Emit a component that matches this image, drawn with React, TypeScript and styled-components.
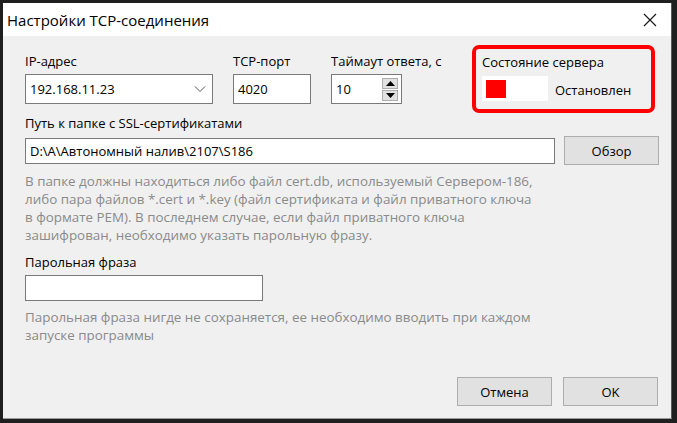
import React from 'react';
import styled, { createGlobalStyle } from 'styled-components';

const GlobalStyle = createGlobalStyle`
  html, body {
    margin: 0;
    padding: 0;
    width: 677px;
    height: 423px;
    overflow: hidden;
    background: #1f1f1f;
  }
  #root {
    height: 100%;
  }
  * {
    box-sizing: border-box;
  }
`;

const Frame = styled.div`
  height: 423px;
  padding: 3px 5px 4px 3px;
  font-family: 'Open Sans', 'Noto Sans', sans-serif;
  font-size: 13px;
  color: #000;
`;

const Window = styled.div`
  height: 100%;
  display: flex;
  flex-direction: column;
  background: #f0f0f0;
  border-bottom: 1px solid #9a9a9a;
  border-right: 1px solid #5a5a5a;
`;

const TitleBar = styled.div`
  height: 33px;
  background: #fff;
  display: flex;
  align-items: center;
  justify-content: space-between;
  padding: 0 14px 0 4px;
  font-size: 15px;
`;

const Content = styled.div`
  flex: 1;
  display: flex;
  flex-direction: column;
  padding: 9px 12px 12px 22px;
`;

const TopRow = styled.div`
  display: flex;
  align-items: flex-start;
  gap: 20px;
`;

const Field = styled.div<{ $w: number }>`
  width: ${(p) => p.$w}px;
  display: flex;
  flex-direction: column;
  padding-top: 7px;
`;

const Label = styled.div`
  height: 18px;
  line-height: 18px;
  margin-bottom: 4px;
  white-space: nowrap;
`;

const Box = styled.div<{ $h?: number }>`
  height: ${(p) => p.$h ?? 30}px;
  background: #fff;
  border: 1px solid #7a7a7a;
  display: flex;
  align-items: center;
  padding-left: 4px;
`;

const BoxText = styled.span`
  flex: 1;
  white-space: nowrap;
`;

const Chevron = styled.svg`
  margin-right: 6px;
`;

const Spin = styled.div`
  display: flex;
  flex-direction: column;
  gap: 1px;
  margin-right: 3px;
`;

const SpinBtn = styled.div`
  width: 16px;
  height: 11px;
  background: #e1e1e1;
  border: 1px solid #adadad;
  display: flex;
  align-items: center;
  justify-content: center;
`;

const StatusPanel = styled.div`
  margin-left: auto;
  margin-right: 4px;
  width: 183px;
  height: 68px;
  border: 4px solid #ff0000;
  border-radius: 7px;
  padding: 3px 6px 0 6px;
`;

const StatusTitle = styled.div`
  height: 20px;
  line-height: 20px;
`;

const StatusRow = styled.div`
  display: flex;
  align-items: center;
  margin-top: 4px;
`;

const Indicator = styled.div`
  width: 66px;
  height: 25px;
  background: #fff;
  padding: 4px;
`;

const IndicatorLamp = styled.div`
  width: 20px;
  height: 18px;
  background: #ff0000;
`;

const StatusText = styled.span`
  margin-left: 7px;
  padding-top: 2px;
`;

const PathSection = styled.div`
  margin-top: 1px;
  display: flex;
  flex-direction: column;
`;

const PathRow = styled.div`
  display: flex;
  align-items: center;
  gap: 9px;
`;

const WideBox = styled(Box)`
  flex: 1;
`;

const Button = styled.button<{ $w?: number }>`
  width: ${(p) => p.$w ?? 95}px;
  height: 29px;
  background: #e1e1e1;
  border: 1px solid #adadad;
  font: inherit;
  color: #000;
  padding: 0;
`;

const Hint = styled.p`
  margin: 7px 0 0 0;
  color: #8a8a8a;
  line-height: 18px;
  font-size: 13.4px;
  white-space: nowrap;
`;

const PassSection = styled.div`
  margin-top: 9px;
  display: flex;
  flex-direction: column;
  width: 238px;
`;

const Footer = styled.div`
  margin-top: auto;
  display: flex;
  justify-content: flex-end;
  gap: 11px;
  padding-right: 1px;
`;

const CloseIcon = () => (
  <svg width="14" height="14" viewBox="0 0 14 14">
    <path d="M1 1 L13 13 M13 1 L1 13" stroke="#1a1a1a" strokeWidth="1.2" fill="none" />
  </svg>
);

export default function App() {
  return (
    <>
      <GlobalStyle />
      <Frame>
        <Window>
          <TitleBar>
            <span>Настройки TCP-соединения</span>
            <CloseIcon />
          </TitleBar>
          <Content>
            <TopRow>
              <Field $w={188}>
                <Label>IP-адрес</Label>
                <Box>
                  <BoxText>192.168.11.23</BoxText>
                  <Chevron width="12" height="8" viewBox="0 0 12 8">
                    <path d="M1 1.5 L6 6.5 L11 1.5" stroke="#555" strokeWidth="1" fill="none" />
                  </Chevron>
                </Box>
              </Field>
              <Field $w={78}>
                <Label>TCP-порт</Label>
                <Box>
                  <BoxText>4020</BoxText>
                </Box>
              </Field>
              <Field $w={71}>
                <Label>Таймаут ответа, с</Label>
                <Box>
                  <BoxText>10</BoxText>
                  <Spin>
                    <SpinBtn>
                      <svg width="9" height="5" viewBox="0 0 9 5">
                        <path d="M0 5 L4.5 0 L9 5 Z" fill="#000" />
                      </svg>
                    </SpinBtn>
                    <SpinBtn>
                      <svg width="9" height="5" viewBox="0 0 9 5">
                        <path d="M0 0 L4.5 5 L9 0 Z" fill="#000" />
                      </svg>
                    </SpinBtn>
                  </Spin>
                </Box>
              </Field>
              <StatusPanel>
                <StatusTitle>Состояние сервера</StatusTitle>
                <StatusRow>
                  <Indicator>
                    <IndicatorLamp />
                  </Indicator>
                  <StatusText>Остановлен</StatusText>
                </StatusRow>
              </StatusPanel>
            </TopRow>

            <PathSection>
              <Label>Путь к папке с SSL-сертификатами</Label>
              <PathRow>
                <WideBox $h={26}>
                  <BoxText>D:\A\Автономный налив\2107\S186</BoxText>
                </WideBox>
                <Button>Обзор</Button>
              </PathRow>
              <Hint>
                В папке должны находиться либо файл cert.db, используемый Сервером-186,
                <br />
                либо пара файлов *.cert и *.key (файл сертификата и файл приватного ключа
                <br />
                в формате PEM). В последнем случае, если файл приватного ключа
                <br />
                зашифрован, необходимо указать парольную фразу.
              </Hint>
            </PathSection>

            <PassSection>
              <Label>Парольная фраза</Label>
              <Box $h={26} />
            </PassSection>
            <Hint>
              Парольная фраза нигде не сохраняется, ее необходимо вводить при каждом
              <br />
              запуске программы
            </Hint>

            <Footer>
              <Button>Отмена</Button>
              <Button>OK</Button>
            </Footer>
          </Content>
        </Window>
      </Frame>
    </>
  );
}
